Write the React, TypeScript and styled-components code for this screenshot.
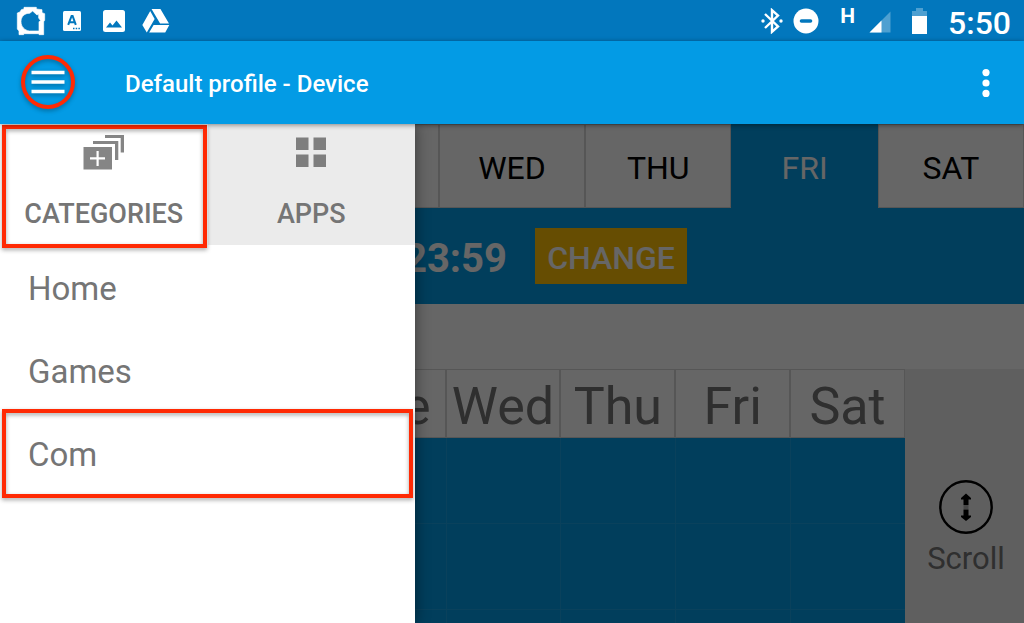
import React from "react";
import styled, { createGlobalStyle, css } from "styled-components";

const GlobalStyle = createGlobalStyle`
  *, *::before, *::after { box-sizing: border-box; }
  body { margin: 0; font-family: Roboto, "Liberation Sans", sans-serif; }
  button { font: inherit; border: 0; padding: 0; margin: 0; cursor: pointer; }
`;

const primary = "#039be5";
const line = "#d6d6d6";
const muted = "#757575";
const mark = "#ff2a04";

const Page = styled.div`
  display: flex;
  flex-direction: column;
  height: 100vh;
  background: #fff;
`;

const StatusBar = styled.div`
  display: flex;
  flex: none;
  align-items: center;
  justify-content: space-between;
  height: 41px;
  padding: 0 13px 0 16px;
  background: #0277bd;
  color: #fff;
`;

const StatusGroup = styled.div<{ $gap: number }>`
  display: flex;
  align-items: center;
  gap: ${(p) => p.$gap}px;
`;

const Clock = styled.time`
  font-size: 32px;
  line-height: 40px;
  padding-top: 5px;
  font-weight: 500;
`;

const Network = styled.span`
  padding-bottom: 10px;
  font-size: 21px;
  line-height: 24px;
  font-weight: 700;
`;

const AppBar = styled.header`
  position: relative;
  z-index: 3;
  flex: none;
  display: flex;
  align-items: center;
  height: 83px;
  padding: 0 20px 2px 21px;
  background: ${primary};
  color: #fff;
  box-shadow: 0 1px 5px rgba(0, 0, 0, 0.45);
`;

const MenuButton = styled.button`
  display: grid;
  place-items: center;
  width: 54px;
  height: 54px;
  border: 4px solid ${mark};
  border-radius: 50%;
  background: transparent;
  color: #fff;
  filter: drop-shadow(0 2px 2px rgba(0, 0, 0, 0.3));
`;

const Title = styled.h1`
  flex: 1;
  margin: 0;
  padding: 5px 0 0 50px;
  font-size: 24px;
  line-height: 32px;
  font-weight: 500;
`;

const MoreButton = styled.button`
  display: grid;
  place-items: center;
  width: 36px;
  height: 48px;
  padding-top: 2px;
  background: transparent;
  color: #fff;
`;

const Main = styled.main`
  position: relative;
  flex: 1;
  min-height: 0;
  display: flex;
  flex-direction: column;
`;

const DayTabs = styled.nav`
  display: grid;
  flex: none;
  grid-template-columns: repeat(7, 1fr);
  background: ${primary};
`;

const DayTab = styled.button<{ $active?: boolean }>`
  height: 84px;
  font-size: 32px;
  line-height: 40px;
  padding-top: 4px;
  border: 1px solid ${(p) => (p.$active ? primary : line)};
  background: ${(p) => (p.$active ? primary : "#fff")};
  color: ${(p) => (p.$active ? "#fff" : "#000")};
`;

const RangeBar = styled.div`
  display: flex;
  flex: none;
  align-items: center;
  justify-content: flex-end;
  gap: 28px;
  height: 96px;
  padding-right: 337px;
  background: ${primary};
  color: #fff;
`;

const Range = styled.span`
  font-size: 40px;
  line-height: 48px;
  padding-top: 6px;
  font-weight: 700;
`;

const ChangeButton = styled.button`
  width: 152px;
  height: 56px;
  padding-top: 3px;
  background: #ffc107;
  color: #fff;
  font-size: 32px;
  font-weight: 500;
`;

const Schedule = styled.div`
  flex: 1;
  min-height: 0;
  overflow: hidden;
  display: flex;
  margin-top: 65px;
  background: #eee;
`;

const WeekPane = styled.div`
  flex: 1;
`;

const WeekTable = styled.table`
  width: 100%;
  table-layout: fixed;
  border-collapse: separate;
  border-spacing: 0;
`;

const HourCol = styled.col`
  width: 101px;
`;

const DayHead = styled.th`
  height: 69px;
  padding: 7px 0 0;
  background: #fff;
  border: 1px solid ${line};
  color: ${muted};
  font-size: 52px;
  line-height: 60px;
  font-weight: 400;
`;

const Slot = styled.td`
  height: 86px;
  padding: 0;
  background: ${primary};
  border: solid #1ba4e6;
  border-width: 0 0 1px 1px;
`;

const Side = styled.aside`
  width: 119px;
  display: flex;
  justify-content: center;
  align-items: flex-start;
  padding: 111px 0 0 3px;
`;

const ScrollButton = styled.button`
  display: flex;
  flex-direction: column;
  align-items: center;
  background: transparent;
  color: ${muted};
  font-size: 31px;
  line-height: 50px;

  svg {
    color: #000;
  }
`;

const Scrim = styled.div`
  position: absolute;
  inset: 0;
  z-index: 1;
  background: rgba(0, 0, 0, 0.6);
`;

const Drawer = styled.aside`
  position: absolute;
  z-index: 2;
  inset: 0 auto 0 0;
  width: 415px;
  background: #fff;
  box-shadow: 0 0 14px rgba(0, 0, 0, 0.45);
`;

const DrawerTabs = styled.div`
  display: grid;
  grid-template-columns: 1fr 1fr;
`;

const marked = css`
  position: relative;

  &::after {
    content: "";
    position: absolute;
    border: 4px solid ${mark};
    filter: drop-shadow(0 2px 2px rgba(0, 0, 0, 0.35));
    pointer-events: none;
  }
`;

const DrawerTab = styled.button<{ $active?: boolean }>`
  display: flex;
  flex-direction: column;
  align-items: center;
  justify-content: space-between;
  height: 121px;
  padding: 11px 0 15px;
  background: ${(p) => (p.$active ? "#fff" : "#ebebeb")};
  color: ${muted};
  font-size: 27px;
  line-height: 32px;
  font-weight: 500;
  ${(p) =>
    p.$active &&
    css`
      ${marked}
      &::after {
        inset: 1px 1px -3px 2px;
      }
    `}
`;

const CategoryList = styled.ul`
  list-style: none;
  margin: 0;
  padding: 1px 0 0;
`;

const Category = styled.li<{ $marked?: boolean }>`
  ${(p) =>
    p.$marked &&
    css`
      ${marked}
      &::after {
        inset: -3px 2px -3px;
      }
    `}
`;

const CategoryButton = styled.button`
  display: block;
  width: 100%;
  height: 83px;
  padding: 2px 28px 0;
  background: transparent;
  color: ${muted};
  font-size: 33px;
  line-height: 40px;
  text-align: left;
`;

const GhostIcon = () => (
  <svg width="30" height="30" viewBox="48 17 90 90" fill="currentColor" aria-hidden="true">
    <path
      fillRule="evenodd"
      stroke="currentColor"
      strokeWidth="2"
      strokeLinejoin="round"
      d="M52 38L60 35L64 28L72 26V21H109V26L126 28V37L134 40V60L131 64V103H117V100H71V103H57V92L52 86ZM98 32L89 39C74 38 63 49 63 64C63 79 74 90 88 92H117V64L122 61L116 53V41L111 44Z"
    />
  </svg>
);

const LetterIcon = () => (
  <svg width="24" height="22" viewBox="0 0 24 22" aria-hidden="true">
    <rect x="1" y="1" width="18" height="20" rx="1.5" fill="currentColor" />
    <path d="M6.2 14.8L9.6 6h1l3.2 8.8M7.3 12.3h5.4" stroke="#0277bd" strokeWidth="2" fill="none" />
    <path d="M11 18.5h1.500M13.7 18.5h1.500M16.4 18.5h1.500" stroke="#0277bd" strokeWidth="1.5" />
  </svg>
);

const PhotoIcon = () => (
  <svg width="24" height="24" viewBox="0 0 24 24" aria-hidden="true">
    <rect x="1" y="1" width="22" height="22" rx="2.5" fill="currentColor" />
    <path d="M4 18.5L8 13.5L10.5 16.5L14.5 11.5L20 18.5Z" fill="#0277bd" />
  </svg>
);

const DriveIcon = () => (
  <svg width="28" height="26" viewBox="426 24 82 74" fill="currentColor" aria-hidden="true">
    <path d="M454 26H480L505 68H479ZM450 32L463 55L440 95L427 73ZM460 73H506L494 95H447Z" />
  </svg>
);

const BluetoothIcon = () => (
  <svg width="22" height="26" viewBox="0 0 22 26" fill="none" stroke="currentColor" strokeWidth="2.400" aria-hidden="true">
    <path d="M4 6L17 18.500L11 23.800V2.200L17 7.500L4 20" />
    <circle cx="2" cy="13" r="1.700" fill="currentColor" stroke="none" />
    <circle cx="20" cy="13" r="1.700" fill="currentColor" stroke="none" />
  </svg>
);

const DndIcon = () => (
  <svg width="26" height="26" viewBox="0 0 26 26" aria-hidden="true">
    <circle cx="13" cy="13" r="12.500" fill="currentColor" />
    <path d="M8.500 13h9" stroke="#0277bd" strokeWidth="3.600" strokeLinecap="round" />
  </svg>
);

const SignalIcon = () => (
  <svg width="22" height="24" viewBox="0 -2 22 24" fill="currentColor" aria-hidden="true">
    <path d="M21.500 .5V21.500H.5Z" opacity=".3" />
    <path d="M12.500 9.500V21.500H.5Z" />
  </svg>
);

const BatteryIcon = () => (
  <svg width="15" height="26" viewBox="0 0 15 26" fill="currentColor" aria-hidden="true">
    <path d="M0 3H4V0H11V3H15V8H0Z" opacity=".3" />
    <path d="M0 8H15V26H0Z" />
  </svg>
);

const MenuIcon = () => (
  <svg width="34" height="24" viewBox="0 0 34 24" stroke="currentColor" strokeWidth="3.600" aria-hidden="true">
    <path d="M.5 2.500h33M.5 12h33M.5 21.500h33" />
  </svg>
);

const MoreIcon = () => (
  <svg width="8" height="28" viewBox="0 0 8 28" fill="currentColor" aria-hidden="true">
    <circle cx="4" cy="3.600" r="3.600" />
    <circle cx="4" cy="14" r="3.600" />
    <circle cx="4" cy="24.400" r="3.600" />
  </svg>
);

const CategoriesIcon = () => (
  <svg width="41" height="35" viewBox="0 0 41 35" fill="#858585" aria-hidden="true">
    <path fillRule="evenodd" d="M.5 12H29V34.500H.5ZM13.500 16V22.300H7V24.600H13.500V31H15.700V24.600H22V22.300H15.700V16Z" />
    <path d="M10 6H35.300V25H32V9H10ZM22 0H41V17.500H37.700V3H22Z" />
  </svg>
);

const AppsIcon = () => (
  <svg width="30" height="35" viewBox="0 0 30 35" fill="#7e7e7e" aria-hidden="true">
    <path d="M0 2.500H12.500V15H0ZM17.500 2.500H30V15H17.500ZM0 19.500H12.500V32H0ZM17.500 19.500H30V32H17.500Z" />
  </svg>
);

const ScrollIcon = () => (
  <svg width="54" height="54" viewBox="0 0 54 54" aria-hidden="true">
    <circle cx="27" cy="27" r="25.700" fill="none" stroke="currentColor" strokeWidth="2.400" />
    <path
      d="M27 13.500L32 18V19.500H29.500V25H24.500V19.500H22V18ZM24.500 29.500H29.500V35.500H32V37L27 41L22 37V35.500H24.500Z"
      fill="currentColor"
    />
    <path d="M24.500 26h5M24.500 28h5" stroke="currentColor" strokeWidth="1" opacity=".5" />
  </svg>
);

const days = ["Sun", "Mon", "Tue", "Wed", "Thu", "Fri", "Sat"];
const categories = ["Home", "Games", "Com"];

export default function App() {
  return (
    <Page>
      <GlobalStyle />
      <StatusBar>
        <StatusGroup $gap={16}>
          <GhostIcon />
          <LetterIcon />
          <PhotoIcon />
          <DriveIcon />
        </StatusGroup>
        <StatusGroup $gap={21}>
          <StatusGroup $gap={10}>
            <BluetoothIcon />
            <DndIcon />
          </StatusGroup>
          <StatusGroup $gap={14}>
            <Network>H</Network>
            <SignalIcon />
          </StatusGroup>
          <BatteryIcon />
          <Clock>5:50</Clock>
        </StatusGroup>
      </StatusBar>
      <AppBar>
        <MenuButton aria-label="Menu">
          <MenuIcon />
        </MenuButton>
        <Title>Default profile - Device</Title>
        <MoreButton aria-label="More options">
          <MoreIcon />
        </MoreButton>
      </AppBar>
      <Main>
        <DayTabs>
          {days.map((day) => (
            <DayTab key={day} $active={day === "Fri"}>
              {day.toUpperCase()}
            </DayTab>
          ))}
        </DayTabs>
        <RangeBar>
          <Range>00:00 - 23:59</Range>
          <ChangeButton>CHANGE</ChangeButton>
        </RangeBar>
        <Schedule>
          <WeekPane>
            <WeekTable>
              <colgroup>
                <HourCol />
                {days.map((day) => (
                  <col key={day} />
                ))}
              </colgroup>
              <thead>
                <tr>
                  <DayHead aria-label="Hour" />
                  {days.map((day) => (
                    <DayHead key={day} scope="col">
                      {day}
                    </DayHead>
                  ))}
                </tr>
              </thead>
              <tbody>
                {[0, 1, 2, 3].map((row) => (
                  <tr key={row}>
                    <Slot />
                    {days.map((day) => (
                      <Slot key={day} />
                    ))}
                  </tr>
                ))}
              </tbody>
            </WeekTable>
          </WeekPane>
          <Side>
            <ScrollButton>
              <ScrollIcon />
              Scroll
            </ScrollButton>
          </Side>
        </Schedule>
        <Scrim />
        <Drawer>
          <DrawerTabs>
            <DrawerTab $active>
              <CategoriesIcon />
              CATEGORIES
            </DrawerTab>
            <DrawerTab>
              <AppsIcon />
              APPS
            </DrawerTab>
          </DrawerTabs>
          <CategoryList>
            {categories.map((name) => (
              <Category key={name} $marked={name === "Com"}>
                <CategoryButton>{name}</CategoryButton>
              </Category>
            ))}
          </CategoryList>
        </Drawer>
      </Main>
    </Page>
  );
}
